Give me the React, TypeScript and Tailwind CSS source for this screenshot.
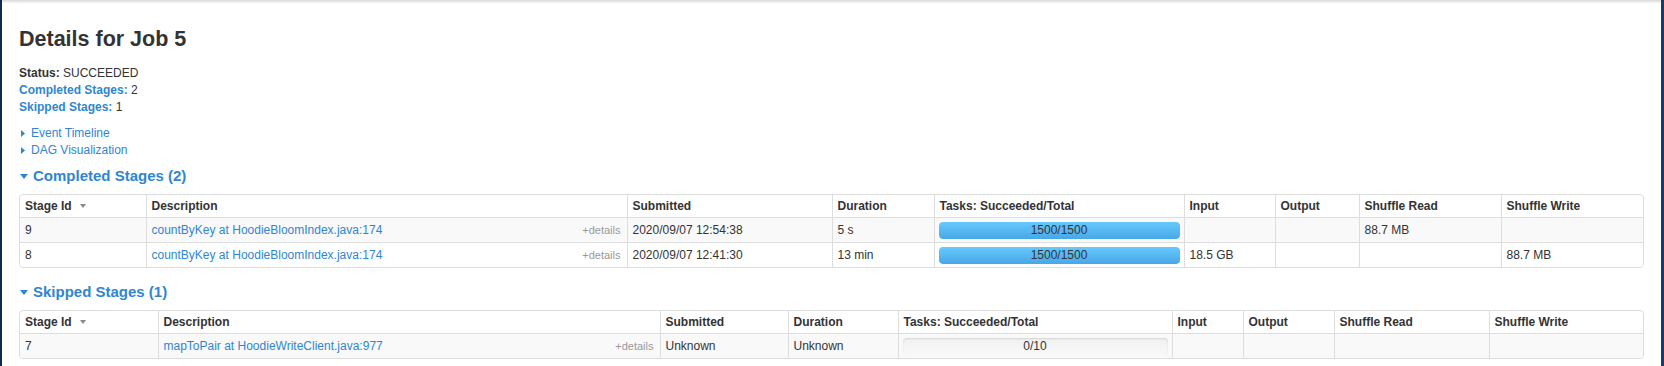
import React from "react";

interface Stage {
  id: number;
  description: string;
  submitted: string;
  duration: string;
  succeeded: number;
  total: number;
  input: string;
  output: string;
  shuffleRead: string;
  shuffleWrite: string;
}

const completed: Stage[] = [
  { id: 9, description: "countByKey at HoodieBloomIndex.java:174", submitted: "2020/09/07 12:54:38", duration: "5 s", succeeded: 1500, total: 1500, input: "", output: "", shuffleRead: "88.7 MB", shuffleWrite: "" },
  { id: 8, description: "countByKey at HoodieBloomIndex.java:174", submitted: "2020/09/07 12:41:30", duration: "13 min", succeeded: 1500, total: 1500, input: "18.5 GB", output: "", shuffleRead: "", shuffleWrite: "88.7 MB" },
];

const skipped: Stage[] = [
  { id: 7, description: "mapToPair at HoodieWriteClient.java:977", submitted: "Unknown", duration: "Unknown", succeeded: 0, total: 10, input: "", output: "", shuffleRead: "", shuffleWrite: "" },
];

const link = "text-[#2f86cf]";
const th = "border-l border-[#ddd] first:border-l-0 px-[5px] py-[3px] text-left font-bold leading-[16px]";
const td = "border-l border-t border-[#ddd] first:border-l-0 px-[5px] py-[4px] leading-[16px] whitespace-nowrap overflow-hidden";

function RightArrow() {
  return (
    <svg width="4" height="7" viewBox="0 0 4 7" className="shrink-0">
      <polygon points="0,0 4,3.5 0,7" fill="#2f86cf" />
    </svg>
  );
}

function DownArrow() {
  return (
    <svg width="8" height="5" viewBox="0 0 8 5" className="shrink-0">
      <polygon points="0,0 8,0 4,5" fill="#2f86cf" />
    </svg>
  );
}

function Progress({ done, total }: { done: number; total: number }) {
  const pct = total > 0 ? (done / total) * 100 : 0;
  return (
    <div className="relative h-[17px] rounded-[4px] bg-gradient-to-b from-[#f0f0f0] to-[#f9f9f9] shadow-[inset_0_1px_2px_rgba(0,0,0,0.12)] overflow-hidden">
      <div
        className="absolute inset-y-0 left-0 rounded-[4px] bg-gradient-to-b from-[#66c9fc] to-[#48a7e7]"
        style={{ width: `${pct}%` }}
      />
      <div className="relative text-center leading-[17px] text-[#333]">
        {done}/{total}
      </div>
    </div>
  );
}

function StageTable({ stages, widths }: { stages: Stage[]; widths: string[] }) {
  const heads = ["Stage Id", "Description", "Submitted", "Duration", "Tasks: Succeeded/Total", "Input", "Output", "Shuffle Read", "Shuffle Write"];
  return (
    <div className="mt-[8px] border border-[#ddd] rounded-[4px] overflow-hidden">
      <table className="w-full table-fixed border-collapse text-[12px] text-[#333]">
        <colgroup>
          {widths.map((w, i) => (
            <col key={i} className={w} />
          ))}
          <col />
        </colgroup>
        <thead>
          <tr>
            {heads.map((h, i) => (
              <th key={h} className={th}>
                {i === 0 ? (
                  <span className="flex items-center gap-[8px]">
                    {h}
                    <svg width="6" height="4" viewBox="0 0 6 4">
                      <polygon points="0,0 6,0 3,4" fill="#888" />
                    </svg>
                  </span>
                ) : (
                  h
                )}
              </th>
            ))}
          </tr>
        </thead>
        <tbody>
          {stages.map((s, i) => (
            <tr key={s.id} className={i % 2 === 0 ? "bg-[#f9f9f9]" : "bg-white"}>
              <td className={td}>{s.id}</td>
              <td className={td}>
                <div className="flex items-center justify-between">
                  <span className={link}>{s.description}</span>
                  <span className="text-[11px] text-[#999] pr-[1px]">+details</span>
                </div>
              </td>
              <td className={td}>{s.submitted}</td>
              <td className={td}>{s.duration}</td>
              <td className="border-l border-t border-[#ddd] px-[4px] py-[3px] leading-[16px]">
                <div className="pt-[1px]">
                  <Progress done={s.succeeded} total={s.total} />
                </div>
              </td>
              <td className={td}>{s.input}</td>
              <td className={td}>{s.output}</td>
              <td className={td}>{s.shuffleRead}</td>
              <td className={td}>{s.shuffleWrite}</td>
            </tr>
          ))}
        </tbody>
      </table>
    </div>
  );
}

export default function App() {
  return (
    <div className="flex h-[366px] w-full overflow-hidden bg-white font-['Liberation_Sans',Arial,sans-serif] text-[#333]">
      <div className="w-[2px] shrink-0 bg-[#0f2a4e]" />
      <div className="flex-1 min-w-0">
        <div className="h-[3px] bg-gradient-to-b from-[#d9d9d9] to-[#f7f7f7]" />
        <div className="px-[17px]">
          <h3 className="mt-[23px] text-[21.5px] font-bold leading-[26px] text-[#333]">Details for Job 5</h3>

          <ul className="mt-[13px] text-[12px] leading-[17px]">
            <li>
              <strong>Status:</strong> SUCCEEDED
            </li>
            <li>
              <strong className={link}>Completed Stages:</strong> 2
            </li>
            <li>
              <strong className={link}>Skipped Stages:</strong> 1
            </li>
          </ul>

          <div className={`mt-[9px] text-[12px] leading-[17px] ${link}`}>
            <div className="flex items-center gap-[6px] pl-[2px]">
              <RightArrow />
              <span>Event Timeline</span>
            </div>
            <div className="flex items-center gap-[6px] pl-[2px]">
              <RightArrow />
              <span>DAG Visualization</span>
            </div>
          </div>

          <h4 className={`mt-[7px] flex items-center gap-[5px] pl-[1px] text-[15px] font-bold leading-[20px] ${link}`}>
            <DownArrow />
            <span>Completed Stages (2)</span>
          </h4>
          <StageTable
            stages={completed}
            widths={["w-[126px]", "w-[481px]", "w-[205px]", "w-[102px]", "w-[250px]", "w-[91px]", "w-[84px]", "w-[142px]"]}
          />

          <h4 className={`mt-[14px] flex items-center gap-[5px] pl-[1px] text-[15px] font-bold leading-[20px] ${link}`}>
            <DownArrow />
            <span>Skipped Stages (1)</span>
          </h4>
          <StageTable
            stages={skipped}
            widths={["w-[138px]", "w-[502px]", "w-[128px]", "w-[110px]", "w-[274px]", "w-[71px]", "w-[91px]", "w-[155px]"]}
          />
        </div>
      </div>
      <div className="w-[3px] shrink-0 bg-[#163a6b]" />
    </div>
  );
}
